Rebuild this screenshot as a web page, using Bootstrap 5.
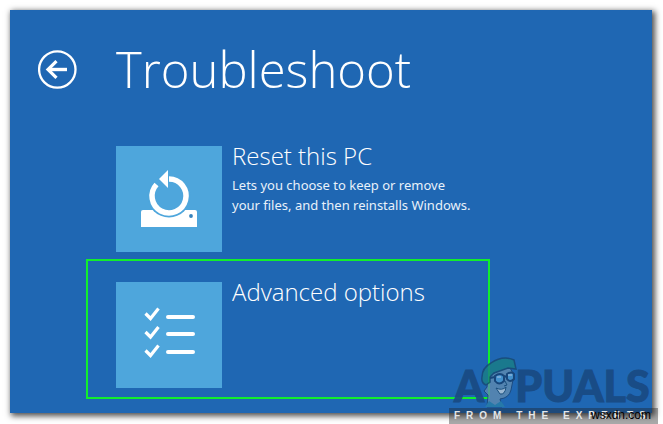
<!DOCTYPE html>
<html lang="en">
<head>
<meta charset="utf-8">
<meta name="viewport" content="width=device-width, initial-scale=1">
<title>Troubleshoot</title>
<link href="https://cdn.jsdelivr.net/npm/bootstrap@5.3.0/dist/css/bootstrap.min.css" rel="stylesheet">
<style>
body { font-family: "Noto Sans", "Open Sans", sans-serif; background: #fff; min-height: 100vh; }
.screen { margin: 10px 11px 11px 10px; background: #1f67b3; color: #fff; padding: 28px; padding-bottom: 14px;
  box-shadow: 2px 2px 6px 1px rgba(0,0,0,.7); }
.top-row { gap: 39px; height: 62px; }
.back { width: 39px; height: 39px; color: #fff; }
.back svg, .tile svg { display: block; }
h1 { font-family: "Open Sans", sans-serif; font-weight: 300; font-size: 49px; line-height: 60px; }
.options { margin: 44px 0 0 48px; max-width: 404px; }
.option { color: #fff; border: 2px solid transparent; padding: 21px 0 9px 28px; gap: 10px; background: none; width: 100%; }
.option:first-child { padding-top: 0; padding-bottom: 5px; }
.option.picked { border-color: #12ee2c; }
.tile { width: 106px; height: 106px; background: #4ea6dc; flex: none; }
.option-title { font-family: "Open Sans", sans-serif; font-weight: 300; font-size: 24px; line-height: 30px; margin-top: -5px; }
.option-note { font-size: 13px; line-height: 20px; margin-top: 4px; color: #e8f1fa; }
.brand { position: absolute; right: 5px; bottom: 0; width: 209px; }
.brand-name { font-family: "Lato", sans-serif; font-weight: 900; font-size: 43px; line-height: 36px; color: #194a82; padding: 0 8px 0 5px; -webkit-text-stroke: 1px #194a82; opacity: .9; }
.brand-name svg { width: 36px; height: 52px; flex: none; margin: -8px -2px 0 -3px; opacity: .9; }
.brand-line { background: rgba(30,30,30,.38); color: #e4e6e8; font: 700 10px/16px "Liberation Sans", sans-serif; height: 16px; padding-left: 5px; letter-spacing: 6px; white-space: nowrap; overflow: hidden; }
.site { position: absolute; right: 12px; bottom: 2px; color: #000; font: 12px/14px "Liberation Sans", sans-serif; }
</style>
</head>
<body class="position-relative overflow-hidden">
<main class="screen">
  <header class="top-row d-flex align-items-center">
    <button type="button" class="back btn p-0 border-0 rounded-circle" aria-label="Back">
      <svg width="39" height="39" viewBox="0 0 39 39" fill="none" stroke="#fff"><circle cx="19.3" cy="19.5" r="18.2" stroke-width="2.3"/><path d="M29 19.5H10" stroke-width="3.4"/><path d="M18.5 11.2 10 19.5l8.500 8.300" stroke-width="3.200"/></svg>
    </button>
    <h1 class="mb-0">Troubleshoot</h1>
  </header>
  <section class="options">
    <button type="button" class="option d-flex align-items-start text-start">
      <span class="tile"><svg width="106" height="106" viewBox="0 0 106 106"><path d="M27 64h52q2 0 2 2v15H25V66q0-2 2-2z" fill="#fff"/><circle cx="53" cy="50" r="21.500" fill="#4ea6dc"/><path d="M40.500 38.500A17 17 0 1 0 53 33" fill="none" stroke="#fff" stroke-width="5.500"/><path d="M52 24v18l-9-9z" fill="#fff"/><circle cx="75" cy="70" r="1.900" fill="#3683bd"/></svg></span>
      <span><span class="option-title d-block">Reset this PC</span><span class="option-note d-block">Lets you choose to keep or remove<br>your files, and then reinstalls Windows.</span></span>
    </button>
    <button type="button" class="option picked d-flex align-items-start text-start">
      <span class="tile"><svg width="106" height="106" viewBox="0 0 106 106" fill="none" stroke="#fff"><path d="m29.500 31.500 5 5 8-10m-13 23.500 5 5 8-10m-13 23.500 5 5 8-10" stroke-width="3.200"/><path d="M52 35h25M52 52h25M52 70h25" stroke-width="4" stroke-linecap="round"/></svg></span>
      <span class="option-title">Advanced options</span>
    </button>
  </section>
</main>
<aside class="brand">
  <div class="brand-name d-flex align-items-center"><span>A</span>
    <svg viewBox="0 0 36 52" aria-hidden="true"><path d="M7 20 6 31 3 35l4 4-1 12h15l-2-8q9-1 11-9l3-15-5-9z" fill="#5f8bb0" stroke="#1b4677"/><path d="M1 21Q1 12 10 7 22-1 33 4l2 9-8-1-14 5-4 4v5l-4 3q-5-2-4-8z" fill="#1a7f85" stroke="#194a72" stroke-width="1.500"/><path d="M14 20q5-4 9 0v5q-5 5-9 0zM26 18q5-3 7 0v5q-4 4-7 0zM9 22l5-1m9 0 3-1" fill="#4d9ad1" stroke="#17406f" stroke-width="2"/><path d="M16 21h4m7-2h4" stroke="#9fc4e4" stroke-width="1.500"/><path d="m24 25 2 4-3 1" fill="none" stroke="#194a72"/><path d="M15 32q6 3 10-1-1 8-6 7z" fill="#b8cbdb" stroke="#194a72"/><path d="m4 51 4-6 6 4 6-4 4 6z" fill="#287fa7"/></svg>
    <span>PUALS</span></div>
  <div class="brand-line">FROM THE EXPERTS</div>
</aside>
<div class="site">wsxdn.com</div>
<script src="https://cdn.jsdelivr.net/npm/bootstrap@5.3.0/dist/js/bootstrap.bundle.min.js"></script>
</body>
</html>
